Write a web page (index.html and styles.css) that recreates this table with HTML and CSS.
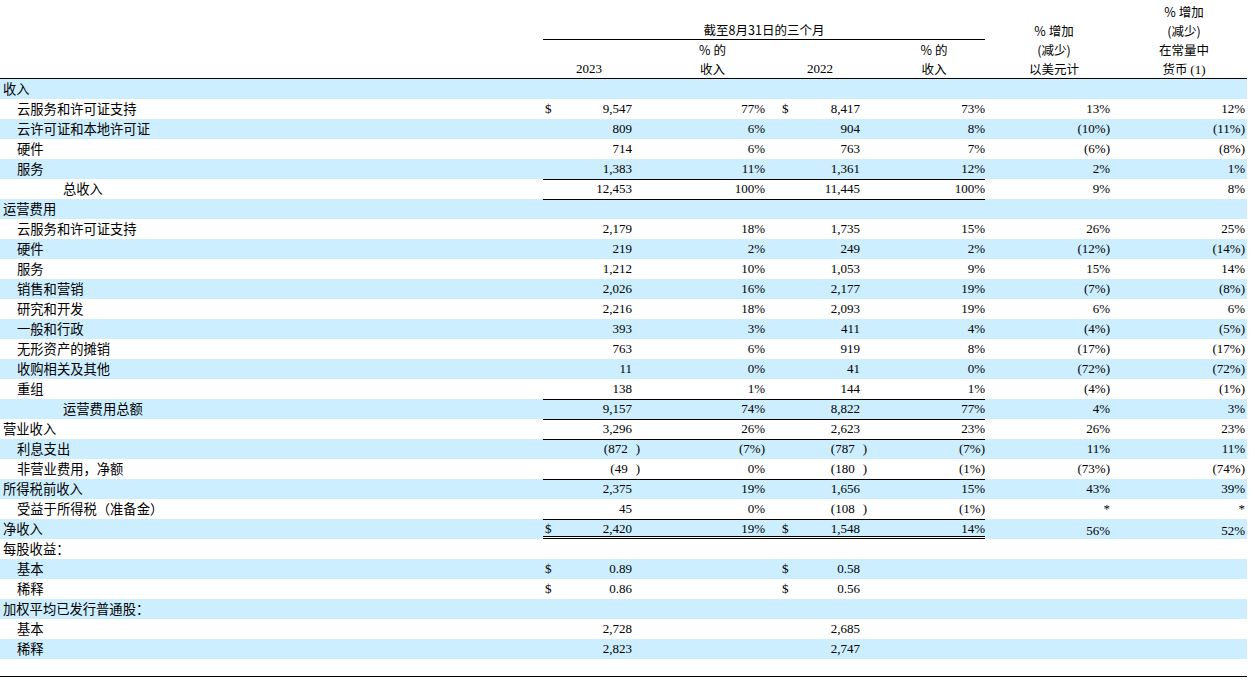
FILE: index.html
```html
<!DOCTYPE html>
<html lang="zh-CN">
<head>
<meta charset="utf-8">
<title>三个月经营业绩</title>
<link rel="stylesheet" href="styles.css">
</head>
<body>
<div class="sheet">
  <div class="head cols">
    <div class="period">截至8月31日的三个月</div>
    <div class="h h1 r4">2023</div>
    <div class="h h2 r3">% 的</div>
    <div class="h h2 r4">收入</div>
    <div class="h h3 r4">2022</div>
    <div class="h h4 r3">% 的</div>
    <div class="h h4 r4">收入</div>
    <div class="h h5 r2">% 增加</div>
    <div class="h h5 r3">(减少)</div>
    <div class="h h5 r4">以美元计</div>
    <div class="h h6 r1">% 增加</div>
    <div class="h h6 r2">(减少)</div>
    <div class="h h6 r3">在常量中</div>
    <div class="h h6 r4">货币 <span class="serif">(1)</span></div>
  </div>

  <div class="row cols alt"><div class="lbl l0">收入</div></div>
  <div class="row cols">
    <div class="lbl l1">云服务和许可证支持</div>
    <div class="amt a1"><span class="dol">$</span><span>9,547</span></div>
    <div class="pct">77%</div>
    <div class="amt a2"><span class="dol">$</span><span>8,417</span></div>
    <div class="pct">73%</div>
    <div class="chg">13%</div>
    <div class="chg cc">12%</div>
  </div>
  <div class="row cols alt">
    <div class="lbl l1">云许可证和本地许可证</div>
    <div class="amt a1"><span>809</span></div>
    <div class="pct">6%</div>
    <div class="amt a2"><span>904</span></div>
    <div class="pct">8%</div>
    <div class="chg">(10%)</div>
    <div class="chg cc">(11%)</div>
  </div>
  <div class="row cols">
    <div class="lbl l1">硬件</div>
    <div class="amt a1"><span>714</span></div>
    <div class="pct">6%</div>
    <div class="amt a2"><span>763</span></div>
    <div class="pct">7%</div>
    <div class="chg">(6%)</div>
    <div class="chg cc">(8%)</div>
  </div>
  <div class="row cols alt">
    <div class="lbl l1">服务</div>
    <div class="amt a1"><span>1,383</span></div>
    <div class="pct">11%</div>
    <div class="amt a2"><span>1,361</span></div>
    <div class="pct">12%</div>
    <div class="chg">2%</div>
    <div class="chg cc">1%</div>
  </div>
  <div class="row cols ln">
    <div class="lbl l2">总收入</div>
    <div class="amt a1"><span>12,453</span></div>
    <div class="pct">100%</div>
    <div class="amt a2"><span>11,445</span></div>
    <div class="pct">100%</div>
    <div class="chg">9%</div>
    <div class="chg cc">8%</div>
  </div>
  <div class="row cols alt ln">
    <div class="lbl l0">运营费用</div>
    <div class="amt a1"></div><div class="pct"></div><div class="amt a2"></div><div class="pct"></div>
  </div>
  <div class="row cols">
    <div class="lbl l1">云服务和许可证支持</div>
    <div class="amt a1"><span>2,179</span></div>
    <div class="pct">18%</div>
    <div class="amt a2"><span>1,735</span></div>
    <div class="pct">15%</div>
    <div class="chg">26%</div>
    <div class="chg cc">25%</div>
  </div>
  <div class="row cols alt">
    <div class="lbl l1">硬件</div>
    <div class="amt a1"><span>219</span></div>
    <div class="pct">2%</div>
    <div class="amt a2"><span>249</span></div>
    <div class="pct">2%</div>
    <div class="chg">(12%)</div>
    <div class="chg cc">(14%)</div>
  </div>
  <div class="row cols">
    <div class="lbl l1">服务</div>
    <div class="amt a1"><span>1,212</span></div>
    <div class="pct">10%</div>
    <div class="amt a2"><span>1,053</span></div>
    <div class="pct">9%</div>
    <div class="chg">15%</div>
    <div class="chg cc">14%</div>
  </div>
  <div class="row cols alt">
    <div class="lbl l1">销售和营销</div>
    <div class="amt a1"><span>2,026</span></div>
    <div class="pct">16%</div>
    <div class="amt a2"><span>2,177</span></div>
    <div class="pct">19%</div>
    <div class="chg">(7%)</div>
    <div class="chg cc">(8%)</div>
  </div>
  <div class="row cols">
    <div class="lbl l1">研究和开发</div>
    <div class="amt a1"><span>2,216</span></div>
    <div class="pct">18%</div>
    <div class="amt a2"><span>2,093</span></div>
    <div class="pct">19%</div>
    <div class="chg">6%</div>
    <div class="chg cc">6%</div>
  </div>
  <div class="row cols alt">
    <div class="lbl l1">一般和行政</div>
    <div class="amt a1"><span>393</span></div>
    <div class="pct">3%</div>
    <div class="amt a2"><span>411</span></div>
    <div class="pct">4%</div>
    <div class="chg">(4%)</div>
    <div class="chg cc">(5%)</div>
  </div>
  <div class="row cols">
    <div class="lbl l1">无形资产的摊销</div>
    <div class="amt a1"><span>763</span></div>
    <div class="pct">6%</div>
    <div class="amt a2"><span>919</span></div>
    <div class="pct">8%</div>
    <div class="chg">(17%)</div>
    <div class="chg cc">(17%)</div>
  </div>
  <div class="row cols alt">
    <div class="lbl l1">收购相关及其他</div>
    <div class="amt a1"><span>11</span></div>
    <div class="pct">0%</div>
    <div class="amt a2"><span>41</span></div>
    <div class="pct">0%</div>
    <div class="chg">(72%)</div>
    <div class="chg cc">(72%)</div>
  </div>
  <div class="row cols">
    <div class="lbl l1">重组</div>
    <div class="amt a1"><span>138</span></div>
    <div class="pct">1%</div>
    <div class="amt a2"><span>144</span></div>
    <div class="pct">1%</div>
    <div class="chg">(4%)</div>
    <div class="chg cc">(1%)</div>
  </div>
  <div class="row cols alt ln">
    <div class="lbl l2">运营费用总额</div>
    <div class="amt a1"><span>9,157</span></div>
    <div class="pct">74%</div>
    <div class="amt a2"><span>8,822</span></div>
    <div class="pct">77%</div>
    <div class="chg">4%</div>
    <div class="chg cc">3%</div>
  </div>
  <div class="row cols ln">
    <div class="lbl l0">营业收入</div>
    <div class="amt a1"><span>3,296</span></div>
    <div class="pct">26%</div>
    <div class="amt a2"><span>2,623</span></div>
    <div class="pct">23%</div>
    <div class="chg">26%</div>
    <div class="chg cc">23%</div>
  </div>
  <div class="row cols alt ln">
    <div class="lbl l1">利息支出</div>
    <div class="amt a1 neg"><span>(872<span class="rp">)</span></span></div>
    <div class="pct">(7%)</div>
    <div class="amt a2 neg"><span>(787<span class="rp">)</span></span></div>
    <div class="pct">(7%)</div>
    <div class="chg">11%</div>
    <div class="chg cc">11%</div>
  </div>
  <div class="row cols">
    <div class="lbl l1">非营业费用，净额</div>
    <div class="amt a1 neg"><span>(49<span class="rp">)</span></span></div>
    <div class="pct">0%</div>
    <div class="amt a2 neg"><span>(180<span class="rp">)</span></span></div>
    <div class="pct">(1%)</div>
    <div class="chg">(73%)</div>
    <div class="chg cc">(74%)</div>
  </div>
  <div class="row cols alt ln">
    <div class="lbl l0">所得税前收入</div>
    <div class="amt a1"><span>2,375</span></div>
    <div class="pct">19%</div>
    <div class="amt a2"><span>1,656</span></div>
    <div class="pct">15%</div>
    <div class="chg">43%</div>
    <div class="chg cc">39%</div>
  </div>
  <div class="row cols">
    <div class="lbl l1">受益于所得税（准备金）</div>
    <div class="amt a1"><span>45</span></div>
    <div class="pct">0%</div>
    <div class="amt a2 neg"><span>(108<span class="rp">)</span></span></div>
    <div class="pct">(1%)</div>
    <div class="chg">*</div>
    <div class="chg cc">*</div>
  </div>
  <div class="row cols alt ln dbl">
    <div class="lbl l0">净收入</div>
    <div class="amt a1"><span class="dol">$</span><span>2,420</span></div>
    <div class="pct">19%</div>
    <div class="amt a2"><span class="dol">$</span><span>1,548</span></div>
    <div class="pct">14%</div>
    <div class="chg low">56%</div>
    <div class="chg cc low">52%</div>
  </div>
  <div class="row cols"><div class="lbl l0">每股收益：</div></div>
  <div class="row cols alt">
    <div class="lbl l1">基本</div>
    <div class="amt a1"><span class="dol">$</span><span>0.89</span></div>
    <div class="pct"></div>
    <div class="amt a2"><span class="dol">$</span><span>0.58</span></div>
  </div>
  <div class="row cols">
    <div class="lbl l1">稀释</div>
    <div class="amt a1"><span class="dol">$</span><span>0.86</span></div>
    <div class="pct"></div>
    <div class="amt a2"><span class="dol">$</span><span>0.56</span></div>
  </div>
  <div class="row cols alt"><div class="lbl l0">加权平均已发行普通股：</div></div>
  <div class="row cols">
    <div class="lbl l1">基本</div>
    <div class="amt a1"><span>2,728</span></div>
    <div class="pct"></div>
    <div class="amt a2"><span>2,685</span></div>
  </div>
  <div class="row cols alt">
    <div class="lbl l1">稀释</div>
    <div class="amt a1"><span>2,823</span></div>
    <div class="pct"></div>
    <div class="amt a2"><span>2,747</span></div>
  </div>
  <div class="foot"></div>
</div>
</body>
</html>
```

FILE: styles.css
```css
* {
  box-sizing: border-box;
  margin: 0;
  padding: 0;
}

body {
  margin: 0;
  background: #ffffff;
  color: #000000;
  font-family: "Liberation Serif", "Times New Roman", serif;
  font-size: 13px;
}

.sheet {
  width: 1247px;
}

.cols {
  display: grid;
  grid-template-columns: 543px 97px 125px 103px 117px 132px 130px;
}

/* ---------- header ---------- */
.head {
  grid-template-rows: 21px 19px 19px 19px;
  border-bottom: 1px solid #000;
  line-height: 19px;
  font-family: "Noto Sans CJK SC", sans-serif;
  font-size: 12.5px;
}

.period {
  grid-column: 2 / 6;
  grid-row: 2;
  text-align: center;
  border-bottom: 1px solid #000;
  line-height: 18px;
}

.h {
  text-align: center;
  white-space: nowrap;
}

.r1 { grid-row: 1; padding-top: 2px; }
.r2 { grid-row: 2; }
.r3 { grid-row: 3; }
.r4 { grid-row: 4; }

.h1 {
  grid-column: 2;
  padding-right: 5px;
  font-family: "Liberation Serif", "Times New Roman", serif;
  font-size: 13px;
}
.h2 { grid-column: 3; padding-left: 20px; }
.h3 {
  grid-column: 4;
  padding-left: 7px;
  font-family: "Liberation Serif", "Times New Roman", serif;
  font-size: 13px;
}
.h4 { grid-column: 5; padding-left: 15px; }
.h5 { grid-column: 6; padding-left: 6px; }
.h6 { grid-column: 7; padding-left: 4px; }

.serif {
  font-family: "Liberation Serif", "Times New Roman", serif;
  font-size: 13px;
}

/* ---------- body rows ---------- */
.row {
  height: 20px;
  line-height: 20px;
}

.alt {
  background: #cceeff;
}

.lbl {
  grid-column: 1;
  font-family: "Noto Sans CJK SC", sans-serif;
  font-size: 13.3px;
  white-space: nowrap;
}

.l0 { padding-left: 3px; }
.l1 { padding-left: 17px; }
.l2 { padding-left: 63px; }

.amt {
  display: flex;
  justify-content: flex-end;
  white-space: nowrap;
}

.a1 {
  grid-column: 2;
  padding-left: 2px;
  padding-right: 8px;
}

.a2 {
  grid-column: 4;
  padding-left: 17px;
  padding-right: 8px;
}

.a1.neg { padding-right: 0; }
.a2.neg { padding-right: 1px; }

.rp {
  margin-left: 8px;
}

.dol {
  margin-right: auto;
}

.pct {
  text-align: right;
  white-space: nowrap;
}

.chg {
  grid-column: 6;
  text-align: right;
  padding-right: 7px;
}

.chg.cc {
  grid-column: 7;
  padding-right: 2px;
}

.low {
  padding-top: 4px;
  line-height: 16px;
}

/* rules across the amount columns */
.ln .amt,
.ln .pct {
  box-shadow: inset 0 1px 0 #000;
}

.dbl .amt,
.dbl .pct {
  box-shadow: inset 0 1px 0 #000, inset 0 -1px 0 #000, inset 0 -2px 0 #fff, inset 0 -3px 0 #000;
}

.foot {
  height: 18px;
  border-bottom: 1px solid #000;
}
```
